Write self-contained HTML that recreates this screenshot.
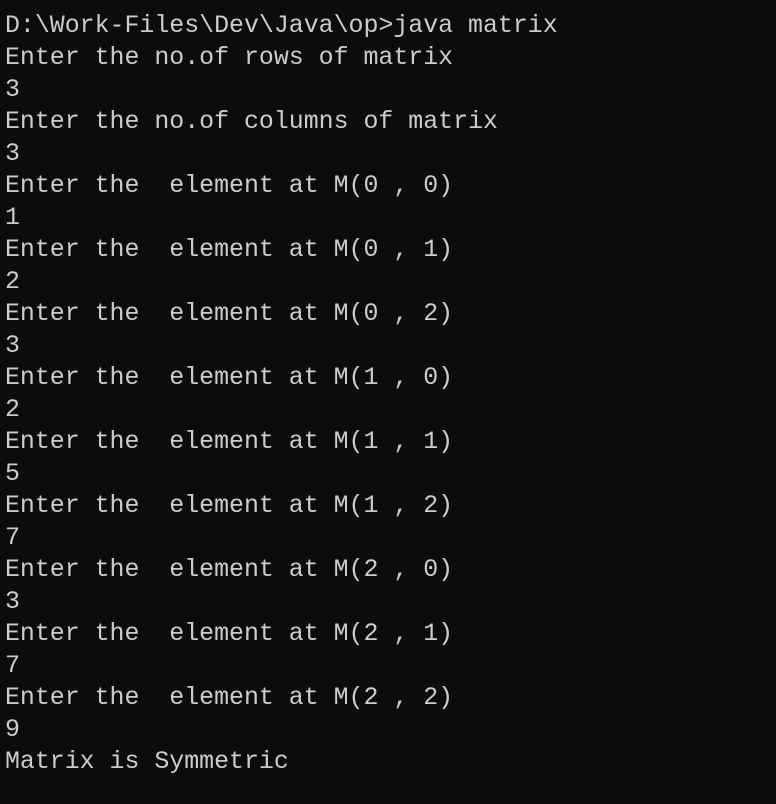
<!DOCTYPE html>
<html><head><meta charset="utf-8"><style>
html,body{margin:0;padding:0;background:#0c0c0c;width:776px;height:804px;overflow:hidden}
pre{margin:0;padding:10px 0 0 5px;font-family:"Liberation Mono",monospace;font-size:24.9px;line-height:32px;color:#cccccc}
</style></head><body><pre>D:\Work-Files\Dev\Java\op>java matrix
Enter the no.of rows of matrix
3
Enter the no.of columns of matrix
3
Enter the  element at M(0 , 0)
1
Enter the  element at M(0 , 1)
2
Enter the  element at M(0 , 2)
3
Enter the  element at M(1 , 0)
2
Enter the  element at M(1 , 1)
5
Enter the  element at M(1 , 2)
7
Enter the  element at M(2 , 0)
3
Enter the  element at M(2 , 1)
7
Enter the  element at M(2 , 2)
9
Matrix is Symmetric</pre></body></html>
